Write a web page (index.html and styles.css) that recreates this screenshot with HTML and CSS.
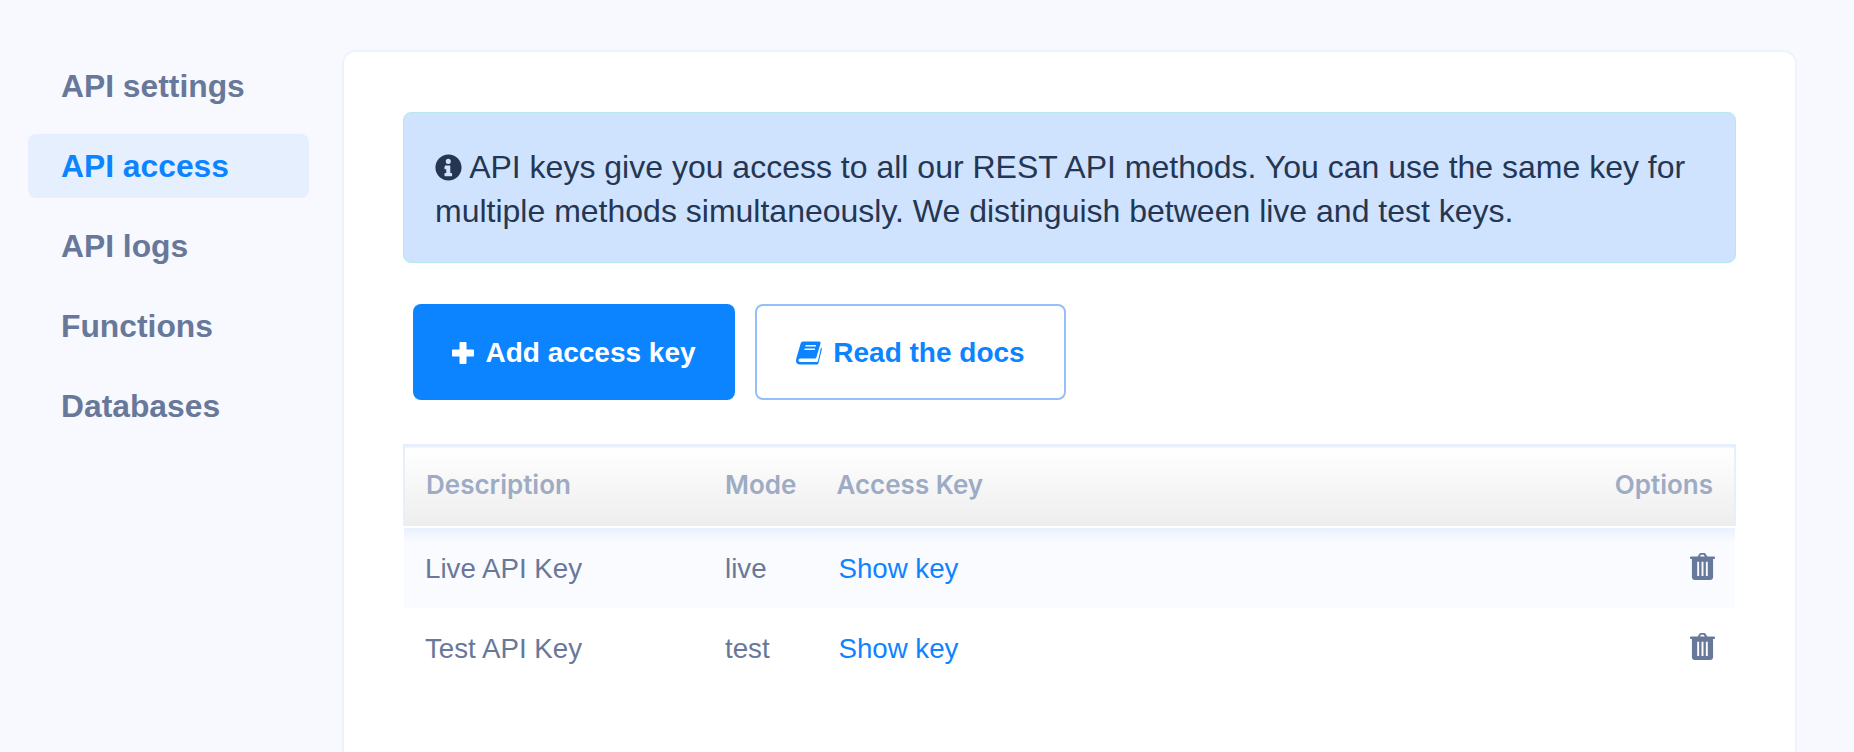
FILE: index.html
```html
<!DOCTYPE html>
<html lang="en">
<head>
  <meta charset="UTF-8" />
  <title>API access</title>
  <link rel="stylesheet" href="styles.css">
</head>
<body>

  <div class="layout">
    <nav class="sidebar">
      <a class="nav-item" href="#">API settings</a>
      <a class="nav-item active" href="#">API access</a>
      <a class="nav-item" href="#">API logs</a>
      <a class="nav-item" href="#">Functions</a>
      <a class="nav-item" href="#">Databases</a>
    </nav>

    <main class="card">
      <div class="notice">
        <svg class="icon-info" viewBox="0 0 512 512"><path fill="#243652" fill-rule="evenodd" d="M256 8C119 8 8 119 8 256s111 248 248 248 248-111 248-248S393 8 256 8zm-4 84a48 48 0 1 1 0 96 48 48 0 0 1 0-96zM190 220h90c6 0 10 4 10 10v130h24c6 0 10 4 10 10v40c0 6-4 10-10 10H190c-6 0-10-4-10-10v-40c0-6 4-10 10-10h24v-70h-24c-6 0-10-4-10-10v-40c0-6 4-10 10-10z"/></svg>
        API keys give you access to all our REST API methods. You can use the same key for multiple methods simultaneously. We distinguish between live and test keys.
      </div>

      <div class="actions">
        <a class="btn btn-primary" href="#">
          <svg class="icon-plus" viewBox="0 0 22 22"><path fill="#fff" d="M7.500 1a1 1 0 0 1 1-1h5a1 1 0 0 1 1 1v6.500H21a1 1 0 0 1 1 1v5a1 1 0 0 1-1 1h-6.500V21a1 1 0 0 1-1 1h-5a1 1 0 0 1-1-1v-6.500H1a1 1 0 0 1-1-1v-5a1 1 0 0 1 1-1h6.500z"/></svg>
          Add access key
        </a>
        <a class="btn btn-outline" href="#">
          <svg class="icon-book" viewBox="0 0 26 24">
            <path fill="#0d84ff" d="M7 .5h16c1.200 0 1.800.8 1.500 2L20.500 16c-.3 1-1 1.500-2 1.500H4.500C3 17.500 2.500 18.300 2.500 19.300S3.200 21 4.500 21h16c.8 0 1.200-.4 1.500-1.200L25 6.500l1 1.200L22.500 22c-.3 1-1 1.500-2 1.500H4C1.500 23.500 0 22 0 19.500c0-.6.100-1.300.3-2L4.500 3C5 1.300 5.800.5 7 .5z"/>
            <path fill="none" stroke="#fff" stroke-width="1.500" d="M9.500 4.800h10.500M8.500 8.300h10.500"/>
          </svg>
          Read the docs
        </a>
      </div>

      <table class="keys">
        <thead>
          <tr>
            <th class="col-desc">Description</th>
            <th class="col-mode">Mode</th>
            <th class="col-key">Access Key</th>
            <th class="col-options">Options</th>
          </tr>
        </thead>
        <tbody>
          <tr class="striped">
            <td>Live API Key</td>
            <td>live</td>
            <td><a href="#">Show key</a></td>
            <td class="col-options"><svg class="icon-trash" viewBox="0 0 26 28"><use href="#trash"/></svg></td>
          </tr>
          <tr>
            <td>Test API Key</td>
            <td>test</td>
            <td><a href="#">Show key</a></td>
            <td class="col-options"><svg class="icon-trash" viewBox="0 0 26 28"><use href="#trash"/></svg></td>
          </tr>
        </tbody>
      </table>
    </main>
  </div>

  <svg class="defs" width="0" height="0">
    <symbol id="trash" viewBox="0 0 26 28">
      <path fill="#68789a" fill-rule="evenodd" d="M8 3.500 9.500 1.200C10 .5 10.600 0 11.500 0h3c.9 0 1.500.5 2 1.200L18 3.500h7c.6 0 1 .4 1 1v.6c0 .6-.4 1-1 1h-1v19c0 1.600-1.300 2.900-2.900 2.900H4.900C3.300 28 2 26.700 2 25.100v-19H1c-.6 0-1-.4-1-1v-.6c0-.6.4-1 1-1zm2.600 0h4.800l-.9-1.300c-.1-.2-.3-.3-.5-.3h-2.500c-.2 0-.4.1-.5.300zM7.500 9v15h2V9zm4.500 0v15h2V9zm4.500 0v15h2V9z"/>
    </symbol>
  </svg>

</body>
</html>
```

FILE: styles.css
```css
html, body {
  margin: 0;
  padding: 0;
  height: 100%;
  overflow: hidden;
}

body {
  font-family: "Liberation Sans", Arial, sans-serif;
  background: #f7f9fe;
  color: #68789a;
}

a {
  text-decoration: none;
}

.layout {
  display: flex;
  align-items: flex-start;
  padding: 50px 0 0 28px;
}

.sidebar {
  width: 281px;
  margin-top: 4px;
  margin-right: 33px;
  flex-shrink: 0;
}

.nav-item {
  display: block;
  height: 64px;
  line-height: 64px;
  padding-left: 33px;
  margin-bottom: 16px;
  border-radius: 8px;
  font-size: 31.8px;
  font-weight: bold;
  color: #68789a;
}

.nav-item.active {
  background: #e6effd;
  color: #0d84ff;
}

.card {
  width: 1455px;
  height: 760px;
  box-sizing: border-box;
  padding: 60px 59px 0;
  background: #fff;
  border: 2px solid #edf3fe;
  border-radius: 14px;
  flex-shrink: 0;
}

.notice {
  box-sizing: border-box;
  height: 151px;
  padding: 32px 30px 0 31px;
  background: #cfe2fe;
  border: 1px solid #b8e8ec;
  border-radius: 8px;
  font-size: 32px;
  line-height: 44px;
  color: #243652;
}

.icon-info {
  width: 27px;
  height: 27px;
  vertical-align: -3px;
}

.actions {
  display: flex;
  gap: 20px;
  margin: 41px 0 44px 10px;
}

.btn {
  box-sizing: border-box;
  display: flex;
  align-items: center;
  justify-content: center;
  height: 96px;
  padding-top: 1px;
  gap: 11px;
  border-radius: 8px;
  font-size: 28px;
  font-weight: bold;
}

.btn-primary {
  width: 322px;
  background: #0d84ff;
  color: #fff;
}

.btn-outline {
  width: 311px;
  background: #fff;
  border: 2px solid #94bff8;
  color: #0d84ff;
}

.icon-plus {
  width: 22px;
  height: 22px;
}

.icon-book {
  width: 26px;
  height: 24px;
}

.keys {
  width: 100%;
  border-collapse: collapse;
  font-size: 27.7px;
}

.keys th {
  height: 75px;
  padding: 0 21px 4px;
  text-align: left;
  font-family: Inter, "Liberation Sans", sans-serif;
  font-size: 26px;
  font-weight: 600;
  color: #9dabc4;
  background: linear-gradient(#fff, #ededed);
  border-top: 3px solid #e6effb;
  border-bottom: 2px solid #fff;
}

.keys th:first-child {
  border-left: 2px solid #e6effb;
}

.keys th:last-child {
  border-right: 2px solid #e6effb;
}

.keys td {
  height: 78px;
  padding: 2px 20px 0 21px;
}

.keys td a {
  color: #0d84ff;
}

.striped td {
  background: linear-gradient(#e9f1fd, #fafbff 14px);
}

.col-desc {
  width: 257px;
}

.col-mode {
  width: 66px;
}

.keys .col-key {
  padding-left: 19px;
}

.keys .col-options {
  text-align: right;
}

.icon-trash {
  display: inline-block;
  width: 25px;
  height: 27px;
  vertical-align: -1px;
}

.defs {
  position: absolute;
}
```
